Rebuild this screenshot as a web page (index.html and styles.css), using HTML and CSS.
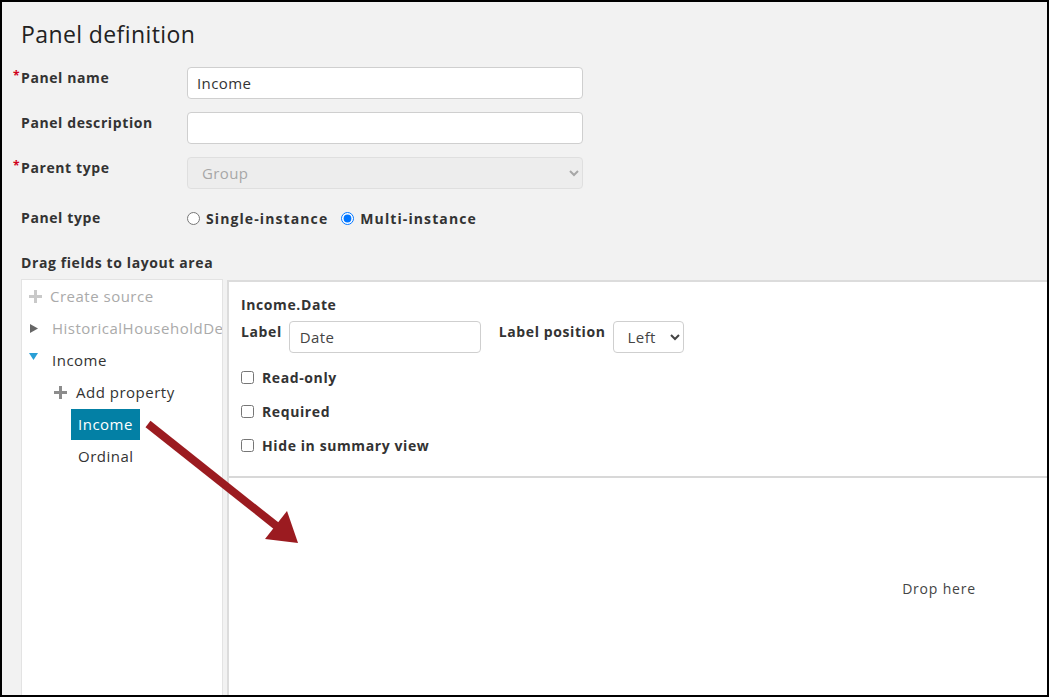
FILE: index.html
```html
<!DOCTYPE html>
<html>
<head>
<meta charset="utf-8">
<link rel="stylesheet" href="styles.css">
</head>
<body>
<div class="frame">
  <h1 class="title">Panel definition</h1>
  <div class="form">
    <label class="flabel"><span class="req">*</span>Panel name</label>
    <input class="field" type="text" value="Income">
    <label class="flabel">Panel description</label>
    <input class="field" type="text" value="">
    <label class="flabel"><span class="req">*</span>Parent type</label>
    <select class="field sel" disabled><option>Group</option></select>
    <label class="flabel center">Panel type</label>
    <div class="radios">
      <label class="radio"><input type="radio" name="pt"> Single-instance</label>
      <label class="radio"><input type="radio" name="pt" checked> Multi-instance</label>
    </div>
  </div>
  <div class="drag-label">Drag fields to layout area</div>
  <div class="panels">
    <div class="tree">
      <div class="item l0 muted">
        <svg class="ico" width="13" height="13" viewBox="0 0 13 13"><path d="M5 0h3v5h5v3H8v5H5V8H0V5h5z" fill="#c9c9c9"/></svg>
        <span class="t1">Create source</span>
      </div>
      <div class="item l0 muted clip">
        <svg class="ico tri" width="8" height="9" viewBox="0 0 8 9"><path d="M0 0L8 4.5L0 9z" fill="#666"/></svg>
        <span class="t2">HistoricalHouseholdDe</span>
      </div>
      <div class="item l0">
        <svg class="ico tri down" width="9" height="8" viewBox="0 0 9 8"><path d="M0 0H9L4.5 7z" fill="#2a9fd6"/></svg>
        <span class="t2">Income</span>
      </div>
      <div class="item l1">
        <svg class="ico" width="13" height="13" viewBox="0 0 13 13"><path d="M5 0h3v5h5v3H8v5H5V8H0V5h5z" fill="#8c8c8c"/></svg>
        <span class="t3">Add property</span>
      </div>
      <div class="item l2"><span class="leaf selected">Income</span></div>
      <div class="item l2"><span class="leaf">Ordinal</span></div>
    </div>
    <div class="editor">
      <div class="props">
        <div class="ptitle">Income.Date</div>
        <div class="prow">
          <label class="plabel">Label</label>
          <input class="pfield" type="text" value="Date">
          <label class="plabel pos">Label position</label>
          <select class="pfield psel"><option>Left</option></select>
        </div>
        <label class="check"><input type="checkbox"> Read-only</label>
        <label class="check"><input type="checkbox"> Required</label>
        <label class="check"><input type="checkbox"> Hide in summary view</label>
      </div>
      <div class="drop">Drop here</div>
    </div>
  </div>
  <svg class="arrow" width="320" height="560" viewBox="0 0 320 560">
    <line x1="148" y1="424" x2="279" y2="528" stroke="#9b1b20" stroke-width="8"/>
    <polygon points="298,543 265,539 287,511" fill="#9b1b20"/>
  </svg>
</div>
</body>
</html>
```
FILE: styles.css
```css
* { box-sizing: border-box; }
body { margin: 0; font-family: "Open Sans", "Noto Sans", sans-serif; color: #333; letter-spacing: 0.6px; }
.frame {
  position: relative;
  width: 1049px; height: 697px;
  border: 2px solid #000;
  background: #f2f2f2;
  overflow: hidden;
}
.title {
  margin: 17px 0 0 19px;
  font-size: 23px; line-height: 30px; font-weight: 500; color: #222; letter-spacing: 0.4px;
}
.form {
  display: grid;
  grid-template-columns: 166px 396px;
  grid-auto-rows: 32px;
  row-gap: 13px;
  margin: 18px 0 0 19px;
}
.flabel { font-size: 14px; font-weight: 700; line-height: 20px; padding-top: 1px; color: #333; }
.flabel.center { align-self: center; padding-top: 0; }
.req { display: inline-block; width: 8px; margin-left: -8px; color: #d0021b; font-size: 12px; vertical-align: top; line-height: 16px; }
.field {
  height: 32px; border: 1px solid #cfcfcf; border-radius: 4px; background: #fff;
  font: 15px "Open Sans", sans-serif; letter-spacing: 0.4px; color: #333; padding: 0 9px;
}
.sel { background: #ececec; color: #888; border-color: #d8d8d8; padding-left: 10px; }
.radios { display: flex; align-items: center; gap: 13px; }
.radio { display: flex; align-items: center; gap: 6px; font-size: 14px; font-weight: 700; letter-spacing: 1.1px; }
.radio input { margin: 0; width: 13px; height: 13px; }
.drag-label { margin: 19px 0 0 19px; font-size: 14px; font-weight: 700; line-height: 20px; }
.panels { display: flex; margin: 6px 0 0 19px; gap: 4px; height: 420px; }
.tree {
  width: 202px; flex-shrink: 0; background: #fff; border: 1px solid #e3e3e3;
  overflow: hidden;
}
.item { height: 32px; display: flex; align-items: center; font-size: 15px; white-space: nowrap; color: #333; letter-spacing: 0.5px; }
.item.muted { color: #aaa; }
.l0 { padding-left: 7px; }
.l1 { padding-left: 32px; }
.l2 { padding-left: 49px; }
.ico { flex-shrink: 0; }
.t1 { margin-left: 8px; }
.tri { margin-left: 1px; }
.t2 { margin-left: 14px; }
.down { margin-left: 0; margin-top: -7px; }
.down + .t2 { margin-left: 14px; }
.t3 { margin-left: 9px; }
.leaf { display: block; height: 31px; line-height: 31px; padding: 0 7px; }
.selected { background: #0380a5; color: #fff; }
.editor {
  width: 1422px; flex-shrink: 0; background: #fff; margin-top: 1px;
  border-top: 2px solid #dcdcdc; border-left: 2px solid #dcdcdc;
}
.props { padding: 13px 12px 21px; border-bottom: 2px solid #d8d8d8; display: flex; flex-direction: column; }
.ptitle { font-size: 14px; font-weight: 700; line-height: 20px; }
.prow { display: flex; align-items: flex-start; margin-top: 6px; margin-bottom: 14px; }
.plabel { font-size: 14px; font-weight: 700; line-height: 20px; padding-top: 1px; }
.pfield {
  height: 32px; border: 1px solid #cfcfcf; border-radius: 4px; background: #fff;
  font: 15px "Open Sans", sans-serif; letter-spacing: 0.4px; color: #444; padding: 0 10px; margin-left: 7px; width: 192px;
}
.pos { margin-left: 18px; }
.psel { width: 71px; padding-left: 10px; }
.check { display: flex; align-items: center; gap: 8px; height: 20px; font-size: 14px; font-weight: 700; }
.check + .check { margin-top: 14px; }
.check input { margin: 0; width: 13px; height: 13px; }
.drop {
  height: 220px; display: flex; align-items: center; justify-content: center;
  font-size: 14px; color: #444; letter-spacing: 0.8px;
}
.arrow { position: absolute; left: -2px; top: -2px; pointer-events: none; }
```
